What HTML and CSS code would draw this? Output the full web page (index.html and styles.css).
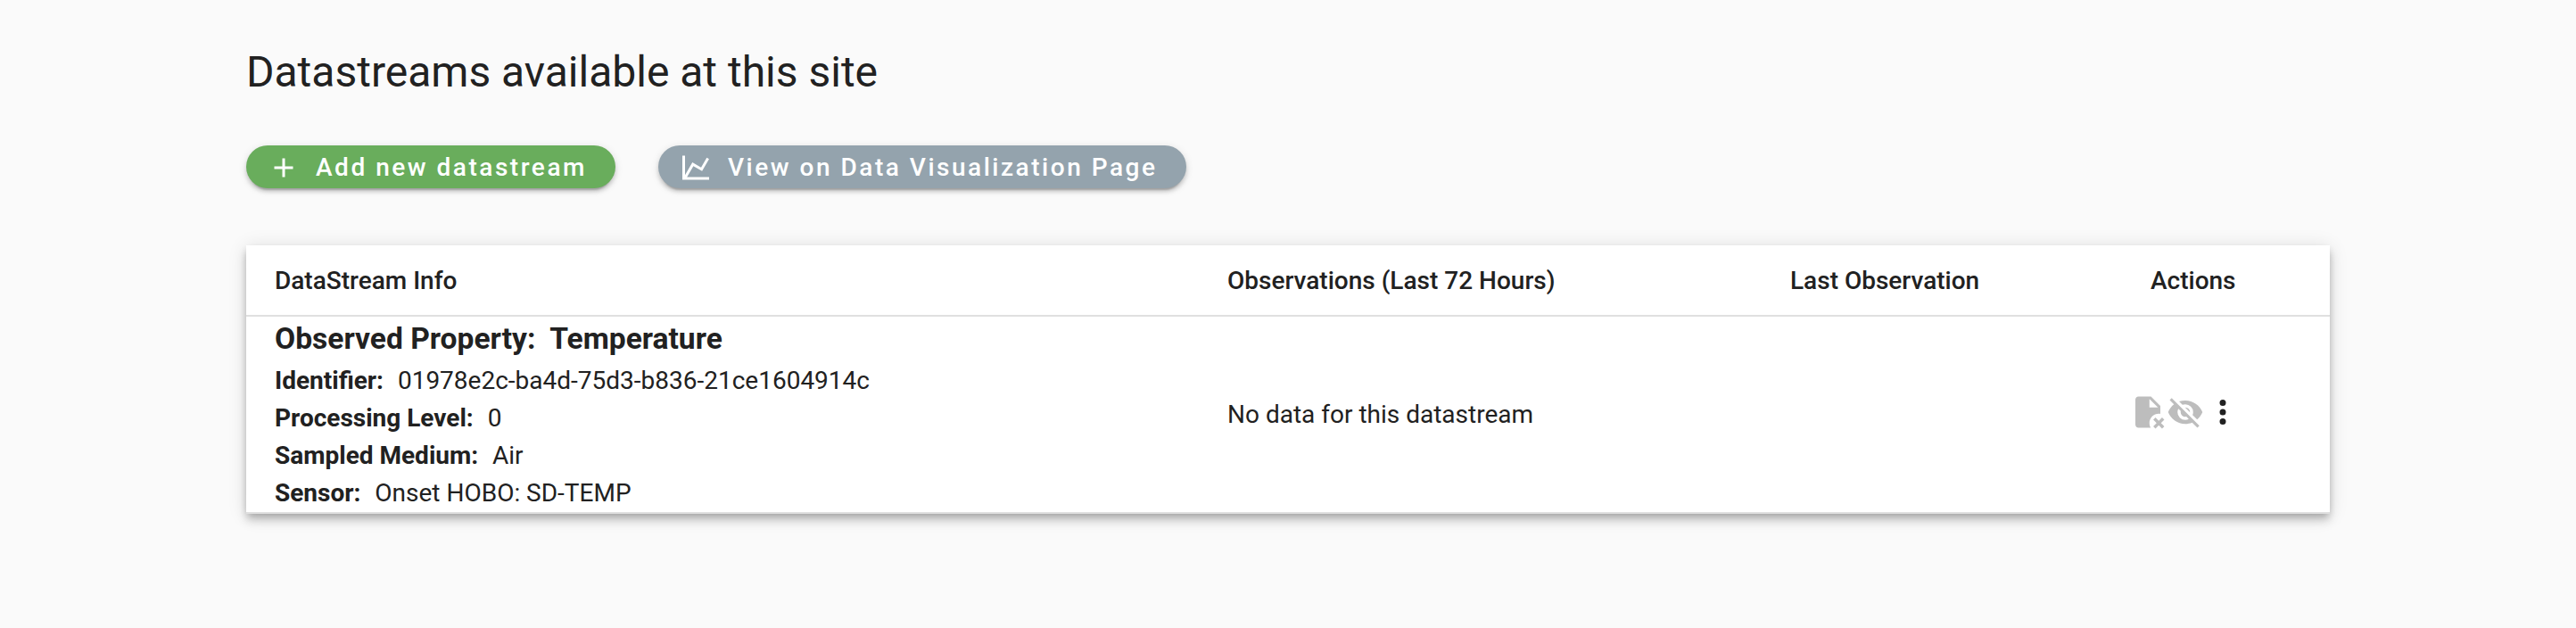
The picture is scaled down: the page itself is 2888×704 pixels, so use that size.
FILE: index.html
```html
<!DOCTYPE html>
<html lang="en">
<head>
<meta charset="utf-8">
<title>Datastreams</title>
<link rel="stylesheet" href="styles.css">
</head>
<body>
<main class="page">
  <h1 class="title">Datastreams available at this site</h1>
  <div class="toolbar">
    <button class="btn btn-add" type="button">
      <svg class="btn-icon" viewBox="0 0 24 24"><path d="M19 13H13V19H11V13H5V11H11V5H13V11H19V13Z"/></svg>
      <span>Add new datastream</span>
    </button>
    <button class="btn btn-view" type="button">
      <svg class="btn-icon" viewBox="0 0 24 24"><path d="M16 11.78L20.24 4.45L21.97 5.45L16.74 14.5L10.23 10.75L5.46 19H22V21H2V3H4V17.54L9.5 8L16 11.78Z"/></svg>
      <span>View on Data Visualization Page</span>
    </button>
  </div>
  <section class="card">
    <div class="row head">
      <div>DataStream Info</div>
      <div>Observations (Last 72 Hours)</div>
      <div>Last Observation</div>
      <div class="actions-head">Actions</div>
    </div>
    <div class="row body">
      <div class="info">
        <p class="property">Observed Property:&nbsp; Temperature</p>
        <p><strong>Identifier:&nbsp;</strong> <span>01978e2c-ba4d-75d3-b836-21ce1604914c</span></p>
        <p><strong>Processing Level:&nbsp;</strong> <span>0</span></p>
        <p><strong>Sampled Medium:&nbsp;</strong> <span>Air</span></p>
        <p><strong>Sensor:&nbsp;</strong> <span>Onset HOBO: SD-TEMP</span></p>
      </div>
      <div>No data for this datastream</div>
      <div></div>
      <div class="actions">
        <svg class="icon muted" viewBox="0 0 24 24"><path d="M22.54 21.12L20.41 19L22.54 16.88L21.12 15.46L19 17.59L16.88 15.46L15.46 16.88L17.59 19L15.46 21.12L16.88 22.54L19 20.41L21.12 22.54ZM6 2C4.89 2 4 2.9 4 4V20C4 21.11 4.89 22 6 22H13.81C13.28 21.09 13 20.05 13 19C13 15.69 15.69 13 19 13C19.34 13 19.67 13.03 20 13.08V8L14 2M13 3.5L18.5 9H13Z"/></svg>
        <svg class="icon muted" viewBox="0 0 24 24"><path d="M11.83 9L15 12.16C15 12.11 15 12.05 15 12A3 3 0 0 0 12 9C11.94 9 11.89 9 11.83 9M7.53 9.8L9.08 11.35C9.03 11.56 9 11.77 9 12A3 3 0 0 0 12 15C12.22 15 12.44 14.97 12.65 14.92L14.2 16.47C13.53 16.8 12.79 17 12 17A5 5 0 0 1 7 12C7 11.21 7.2 10.47 7.53 9.8M2 4.27L4.28 6.55L4.73 7C3.08 8.3 1.78 10 1 12C2.73 16.39 7 19.5 12 19.5C13.55 19.5 15.03 19.2 16.38 18.66L16.81 19.08L19.73 22L21 20.73L3.27 3M12 7A5 5 0 0 1 17 12C17 12.64 16.87 13.26 16.64 13.82L19.57 16.75C21.07 15.5 22.27 13.86 23 12C21.27 7.61 17 4.5 12 4.5C10.6 4.5 9.26 4.75 8 5.2L10.17 7.35C10.74 7.13 11.35 7 12 7Z"/></svg>
        <svg class="icon" viewBox="0 0 24 24"><path d="M12 16A2 2 0 1 1 12 20A2 2 0 0 1 12 16M12 10A2 2 0 1 1 12 14A2 2 0 0 1 12 10M12 4A2 2 0 1 1 12 8A2 2 0 0 1 12 4Z"/></svg>
      </div>
    </div>
  </section>
</main>
</body>
</html>
```
FILE: styles.css
```css
* {
  box-sizing: border-box;
}

body {
  margin: 0;
  min-height: 704px;
  background: #fafafa;
  color: #212121;
  font: 400 28px/42px Roboto, sans-serif;
}

.page {
  width: 2336px;
  margin: 0 auto;
  padding-top: 49px;
}

.title {
  margin: 0 0 50px;
  font-size: 48px;
  font-weight: 400;
  line-height: 64px;
}

.toolbar {
  display: flex;
  gap: 48px;
  margin-bottom: 64px;
}

.btn {
  display: flex;
  align-items: center;
  gap: 18px;
  height: 48px;
  padding: 1px 32px 0 24px;
  border: 0;
  border-radius: 24px;
  color: #fff;
  font: 500 28px/48px Roboto, sans-serif;
  letter-spacing: 2.52px;
  white-space: nowrap;
  box-shadow: 0 6px 2px -4px rgba(0, 0, 0, .2), 0 4px 4px rgba(0, 0, 0, .14), 0 2px 10px rgba(0, 0, 0, .12);
}

.btn-add {
  background: #69ad5c;
}

.btn-view {
  background: #94a3ad;
}

.btn-icon {
  width: 36px;
  height: 36px;
  fill: currentColor;
}

.card {
  background: #fff;
  box-shadow: 0 4px 8px -2px rgba(0, 0, 0, .2), 0 8px 10px rgba(0, 0, 0, .14), 0 2px 20px rgba(0, 0, 0, .12);
}

.row {
  display: grid;
  grid-template-columns: 1068px 631px 381px 1fr;
  align-items: center;
  padding-left: 32px;
  border-bottom: 2px solid #e0e0e0;
}

.head {
  height: 80px;
  padding-top: 1px;
  font-weight: 500;
}

.body {
  height: 221px;
}

.info p {
  margin: 0;
}

.info p span {
  margin-left: 2px;
}

.info .property {
  padding-bottom: 2px;
  font-size: 33.6px;
  font-weight: 700;
  line-height: 48px;
}

.actions-head {
  padding-left: 23px;
}

.actions {
  display: flex;
  padding-bottom: 5px;
}

.icon {
  width: 42px;
  height: 42px;
  margin-left: -1px;
  margin-right: 1px;
  fill: #212121;
}

.muted {
  fill: #bdbdbd;
}
```
